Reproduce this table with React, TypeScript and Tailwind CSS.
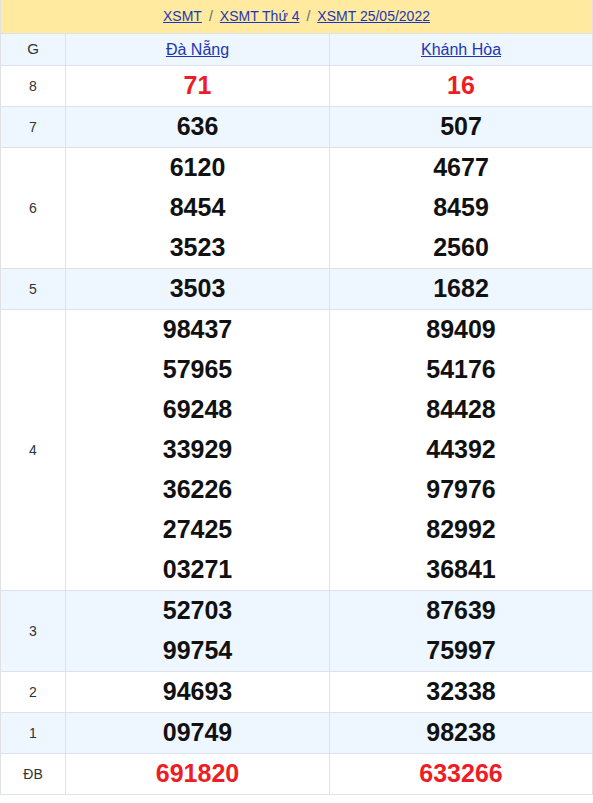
import React from 'react';

const rows = [
  { g: '8', a: ['71'], b: ['16'], red: true },
  { g: '7', a: ['636'], b: ['507'], blue: true },
  { g: '6', a: ['6120', '8454', '3523'], b: ['4677', '8459', '2560'] },
  { g: '5', a: ['3503'], b: ['1682'], blue: true },
  {
    g: '4',
    a: ['98437', '57965', '69248', '33929', '36226', '27425', '03271'],
    b: ['89409', '54176', '84428', '44392', '97976', '82992', '36841'],
  },
  { g: '3', a: ['52703', '99754'], b: ['87639', '75997'], blue: true },
  { g: '2', a: ['94693'], b: ['32338'] },
  { g: '1', a: ['09749'], b: ['98238'], blue: true },
  { g: 'ĐB', a: ['691820'], b: ['633266'], red: true },
];

function Cell({ nums, red }: { nums: string[]; red?: boolean }) {
  return (
    <div className="flex flex-col border-l border-[#dee2e6]">
      {nums.map((n, i) => (
        <div
          key={i}
          className={`h-10 flex items-center justify-center text-[25px] font-bold ${red ? 'text-[#ee1c25]' : 'text-[#111]'}`}
        >
          {n}
        </div>
      ))}
    </div>
  );
}

export default function App() {
  return (
    <div className="w-[593px] bg-white" style={{ fontFamily: '"Liberation Sans", Arial, sans-serif' }}>
      <div className="border-x border-b border-[#dee2e6]">
        {/* breadcrumb */}
        <div className="h-[33px] bg-[#ffeaa0] flex items-center justify-center gap-[7px] text-[14px] text-[#666]">
          <a href="#" className="text-[#1d36b3] underline">XSMT</a>
          <span>/</span>
          <a href="#" className="text-[#1d36b3] underline">XSMT Thứ 4</a>
          <span>/</span>
          <a href="#" className="text-[#1d36b3] underline">XSMT 25/05/2022</a>
        </div>

        {/* header row */}
        <div className="grid grid-cols-[64px_264px_263px] h-[32px] border-t border-[#dee2e6] bg-[#eef6ff]">
          <div className="flex items-center justify-center text-[15px] text-[#333]">G</div>
          <div className="flex items-center justify-center border-l border-[#dee2e6]">
            <a href="#" className="text-[16px] text-[#1d36b3] underline">Đà Nẵng</a>
          </div>
          <div className="flex items-center justify-center border-l border-[#dee2e6]">
            <a href="#" className="text-[16px] text-[#1d36b3] underline">Khánh Hòa</a>
          </div>
        </div>

        {rows.map((r) => (
          <div
            key={r.g}
            className={`grid grid-cols-[64px_264px_263px] border-t border-[#dee2e6] ${r.blue ? 'bg-[#eef6ff]' : 'bg-white'}`}
          >
            <div className="flex items-center justify-center text-[14px] text-[#333]">{r.g}</div>
            <Cell nums={r.a} red={r.red} />
            <Cell nums={r.b} red={r.red} />
          </div>
        ))}
      </div>
    </div>
  );
}
